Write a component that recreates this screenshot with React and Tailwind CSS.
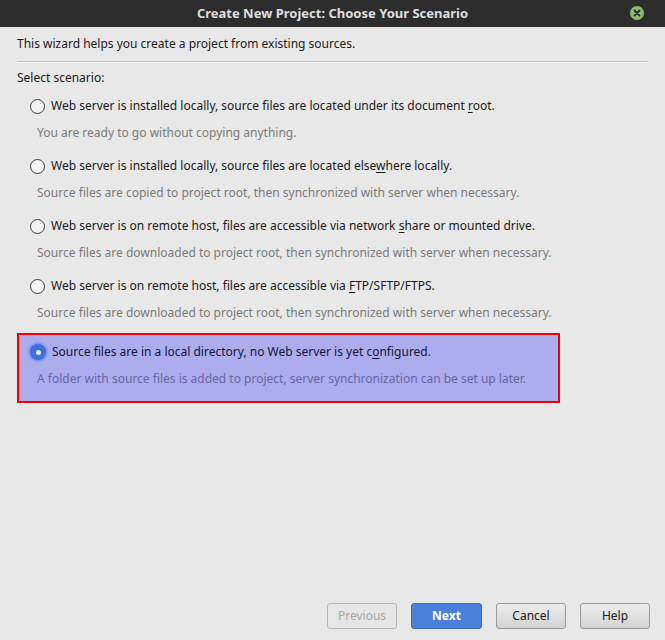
import React from "react";

const U = ({ children }) => <span className="underline underline-offset-2">{children}</span>;

const items = [
  {
    label: <>Web server is installed locally, source files are located under its document <U>r</U>oot.</>,
    desc: "You are ready to go without copying anything.",
  },
  {
    label: <>Web server is installed locally, source files are located else<U>w</U>here locally.</>,
    desc: "Source files are copied to project root, then synchronized with server when necessary.",
  },
  {
    label: <>Web server is on remote host, files are accessible via network <U>s</U>hare or mounted drive.</>,
    desc: "Source files are downloaded to project root, then synchronized with server when necessary.",
  },
  {
    label: <>Web server is on remote host, files are accessible via <U>F</U>TP/SFTP/FTPS.</>,
    desc: "Source files are downloaded to project root, then synchronized with server when necessary.",
  },
];

function Radio({ selected }) {
  if (selected) {
    return (
      <div className="w-[16px] h-[16px] rounded-full bg-[#3d6fe0] flex items-center justify-center shadow-[0_0_3px_1px_rgba(70,110,230,0.7)]">
        <div className="w-[5px] h-[5px] rounded-full bg-[#e8ecff]" />
      </div>
    );
  }
  return <div className="w-[15px] h-[15px] rounded-full border border-[#3a3a3a] bg-[#f4f4f4]" />;
}

export default function App() {
  return (
    <div
      className="w-[665px] h-[640px] bg-[#e8e8e8] flex flex-col text-[12px] text-[#1a1a1a]"
      style={{ fontFamily: '"Noto Sans", sans-serif' }}
    >
      <div className="h-[27px] bg-[#2d2d2d] flex items-center justify-center relative shrink-0">
        <span className="font-bold text-[13px] text-[#dedede]">Create New Project: Choose Your Scenario</span>
        <div className="absolute right-[21px] top-[6px] w-[14px] h-[14px] rounded-full bg-[#8dbb6a] flex items-center justify-center">
          <svg width="8" height="8" viewBox="0 0 8 8">
            <path d="M1.5 1.5 L6.5 6.5 M6.5 1.5 L1.5 6.5" stroke="#2d2d2d" strokeWidth="1.8" strokeLinecap="round" />
          </svg>
        </div>
      </div>
      <div className="px-[17px] pt-[8px] leading-[18px]">This wizard helps you create a project from existing sources.</div>
      <div className="mx-[17px] mt-[8px] h-[2px] border-t border-[#c4c4c4] border-b-[#f6f6f6] border-b" />
      <div className="px-[17px] pt-[6px] leading-[18px]">Select scenario:</div>
      <div className="flex flex-col pt-[10px]">
        {items.map((it, i) => (
          <div key={i} className={`flex flex-col pl-[30px] ${i === 3 ? "h-[56px]" : "h-[60px]"}`}>
            <div className="flex items-center gap-[6px] h-[18px]">
              <Radio />
              <span>{it.label}</span>
            </div>
            <div className="pl-[7px] pt-[9px] leading-[18px] text-[#7a7a7a]">{it.desc}</div>
          </div>
        ))}
        <div className="mx-[17px] w-[543px] h-[70px] border-2 border-[#f00000] bg-[#adadee] pl-[11px] pt-[8px]">
          <div className="flex items-center gap-[6px] h-[18px]">
            <Radio selected />
            <span className="text-[#14143a]">Source files are in a local directory, no Web server is yet c<U>o</U>nfigured.</span>
          </div>
          <div className="pl-[7px] pt-[9px] leading-[18px] text-[#6565a5]">
            A folder with source files is added to project, server synchronization can be set up later.
          </div>
        </div>
      </div>
      <div className="flex-1" />
      <div className="flex justify-end gap-[14px] pr-[15px] pb-[11px]">
        <button className="w-[70px] h-[26px] rounded-[3px] border border-[#b4b4b4] bg-[#e6e6e6] text-[#a8a8a8]">Previous</button>
        <button className="w-[71px] h-[26px] rounded-[3px] border border-[#3b6cc0] bg-[#4a80db] text-white font-bold">Next</button>
        <button className="w-[70px] h-[26px] rounded-[3px] border border-[#9a9a9a] bg-gradient-to-b from-[#ededed] to-[#d2d2d2] text-[#1a1a1a]">Cancel</button>
        <button className="w-[70px] h-[26px] rounded-[3px] border border-[#9a9a9a] bg-gradient-to-b from-[#ededed] to-[#d2d2d2] text-[#1a1a1a]">Help</button>
      </div>
    </div>
  );
}
